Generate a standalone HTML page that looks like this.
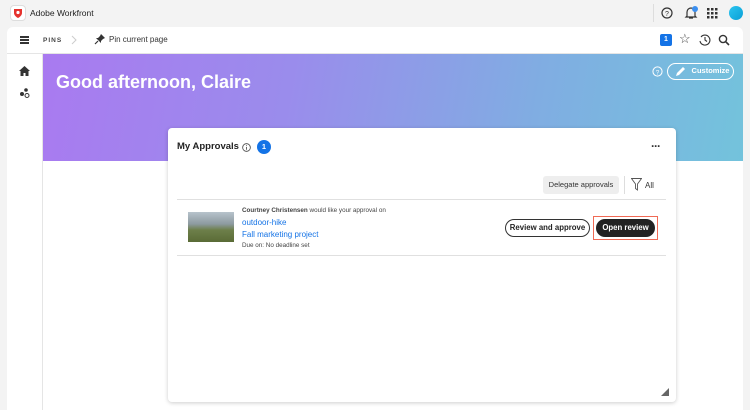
<!DOCTYPE html>
<html><head><style>
*{box-sizing:border-box;margin:0;padding:0}
body{width:750px;height:410px;overflow:hidden;background:#f3f3f3;font-family:"Liberation Sans",sans-serif;position:relative;color:#222}
.abs{position:absolute;white-space:nowrap}
</style></head><body>
<div class="abs" style="left:10px;top:5px;width:16px;height:16px;background:#fff;border:1px solid #ddd;border-radius:4px"></div>
<svg class="abs" style="left:13px;top:8px" width="10" height="10" viewBox="0 0 10 10"><path d="M1 1h8v4c0 2-2 4-4 5C3 9 1 7 1 5z" fill="#e5322d"/><circle cx="5" cy="4.5" r="1.6" fill="#fff"/></svg>
<div class="abs" style="left:30px;top:8px;font-size:8.5px">Adobe Workfront</div>
<div class="abs" style="left:653px;top:4px;width:1px;height:18px;background:#ddd"></div>
<svg class="abs" style="left:661px;top:7px" width="12" height="12" viewBox="0 0 12 12"><circle cx="6" cy="6" r="5" fill="none" stroke="#333" stroke-width="1.2"/><text x="6" y="9" font-size="7" text-anchor="middle" fill="#333" font-family="Liberation Sans">?</text></svg>
<svg class="abs" style="left:684px;top:6px" width="14" height="14" viewBox="0 0 14 14"><path d="M3 10V6a4 4 0 018 0v4l1 1H2z M5 12h4" fill="none" stroke="#333" stroke-width="1.2"/><circle cx="11" cy="3" r="3" fill="#3b8ff0"/></svg>
<svg class="abs" style="left:707px;top:8px" width="11" height="11"><g fill="#333"><rect x="0" y="0" width="2.5" height="2.5"/><rect x="4" y="0" width="2.5" height="2.5"/><rect x="8" y="0" width="2.5" height="2.5"/><rect x="0" y="4" width="2.5" height="2.5"/><rect x="4" y="4" width="2.5" height="2.5"/><rect x="8" y="4" width="2.5" height="2.5"/><rect x="0" y="8" width="2.5" height="2.5"/><rect x="4" y="8" width="2.5" height="2.5"/><rect x="8" y="8" width="2.5" height="2.5"/></g></svg>
<div class="abs" style="left:729px;top:6px;width:14px;height:14px;border-radius:50%;background:linear-gradient(135deg,#2bc5f0,#0a9fd6)"></div>

<div class="abs" style="left:7px;top:27px;width:736px;height:383px;background:#fff;border-radius:6px 6px 0 0"></div>
<div class="abs" style="left:7px;top:53px;width:736px;height:1px;background:#e5e5e5"></div>
<div class="abs" style="left:20px;top:36px;width:9px;height:1.5px;background:#333;box-shadow:0 3px 0 #333,0 6px 0 #333"></div>
<div class="abs" style="left:43px;top:37px;font-size:6.5px;font-weight:bold;letter-spacing:1px;color:#444">PINS</div>
<svg class="abs" style="left:71px;top:35px" width="6" height="10"><path d="M1 1l4 4-4 4" fill="none" stroke="#ccc"/></svg>
<svg class="abs" style="left:94px;top:33px" width="12" height="12" viewBox="0 0 12 12"><path d="M7 1l4 4-2 1-2 2 0 2-5-5 2 0 2-2z" fill="#333"/><path d="M4 8L1 11" stroke="#333" stroke-width="1.2"/></svg>
<div class="abs" style="left:109px;top:35px;font-size:8px;color:#333">Pin current page</div>
<div class="abs" style="left:660px;top:34px;width:12px;height:12px;background:#1473e6;color:#fff;font-size:7px;text-align:center;line-height:12px;border-radius:2px;font-weight:bold">1</div>
<div class="abs" style="left:679px;top:31px;font-size:13px;color:#444">☆</div>
<svg class="abs" style="left:699px;top:34px" width="12" height="12" viewBox="0 0 12 12"><path d="M2 3A5 5 0 1 1 1 7" fill="none" stroke="#333" stroke-width="1.1"/><path d="M6 3v3l2 1.5" fill="none" stroke="#333" stroke-width="1.1"/></svg>
<svg class="abs" style="left:718px;top:34px" width="12" height="12" viewBox="0 0 12 12"><circle cx="5" cy="5" r="3.6" fill="none" stroke="#333" stroke-width="1.4"/><path d="M7.7 7.7L11 11" stroke="#333" stroke-width="1.6"/></svg>

<div class="abs" style="left:42px;top:54px;width:1px;height:356px;background:#e5e5e5"></div>
<svg class="abs" style="left:19px;top:66px" width="11" height="10" viewBox="0 0 11 10"><path d="M5.5 0L0 5h1.5v5h3V7h2v3h3V5H11z" fill="#333"/></svg>
<svg class="abs" style="left:19px;top:88px" width="11" height="10" viewBox="0 0 11 10"><circle cx="3" cy="6" r="2" fill="#333"/><circle cx="7" cy="2" r="1.8" fill="#333"/><circle cx="8" cy="7.5" r="2" fill="none" stroke="#333"/></svg>

<div class="abs" style="left:43px;top:54px;width:700px;height:107px;background:linear-gradient(100deg,#a97af0 0%,#9a8cec 35%,#80ade2 70%,#73c3dc 100%)"></div>
<div class="abs" style="left:56px;top:72px;font-size:18px;color:#fff;font-weight:bold">Good afternoon, Claire</div>
<svg class="abs" style="left:652px;top:66px" width="11" height="11" viewBox="0 0 12 12"><circle cx="6" cy="6" r="5" fill="none" stroke="#fff" stroke-width="1.1"/><text x="6" y="9" font-size="7" text-anchor="middle" fill="#fff" font-family="Liberation Sans">?</text></svg>
<div class="abs" style="left:667px;top:63px;width:67px;height:17px;border:1.5px solid #fff;border-radius:9px;color:#fff;font-size:7.5px;font-weight:bold;line-height:14px;padding-left:20px;text-align:center">Customize</div>
<svg class="abs" style="left:675px;top:66px" width="11" height="11" viewBox="0 0 11 11"><path d="M1 10l1-3 6-6 2 2-6 6z" fill="#fff"/></svg>

<div class="abs" style="left:168px;top:128px;width:508px;height:274px;background:#fff;border-radius:4px;box-shadow:0 1px 4px rgba(0,0,0,.2)"></div>
<div class="abs" style="left:177px;top:141px;font-size:9.5px;font-weight:bold;color:#222">My Approvals</div>
<svg class="abs" style="left:242px;top:143px" width="9" height="9" viewBox="0 0 10 10"><circle cx="5" cy="5" r="4.3" fill="none" stroke="#555"/><path d="M5 4.5v3M5 2.5v1" stroke="#555"/></svg>
<div class="abs" style="left:257px;top:140px;width:14px;height:14px;border-radius:50%;background:#1473e6;color:#fff;font-size:7.5px;text-align:center;line-height:14px;font-weight:bold">1</div>
<div class="abs" style="left:651px;top:139px;font-size:12px;font-weight:bold;color:#333;letter-spacing:-1px">···</div>
<div class="abs" style="left:543px;top:176px;width:76px;height:18px;background:#eee;border-radius:3px;font-size:7.5px;color:#333;text-align:center;line-height:18px">Delegate approvals</div>
<div class="abs" style="left:624px;top:176px;width:1px;height:18px;background:#ddd"></div>
<svg class="abs" style="left:631px;top:178px" width="11" height="13" viewBox="0 0 11 13"><path d="M.5.5h10L6.5 6v6l-2-1.5V6z" fill="none" stroke="#555" stroke-width=".9"/></svg>
<div class="abs" style="left:645px;top:181px;font-size:8px;color:#333">All</div>
<div class="abs" style="left:177px;top:199px;width:489px;height:1px;background:#e0e0e0"></div>
<div class="abs" style="left:177px;top:255px;width:489px;height:1px;background:#e0e0e0"></div>
<div class="abs" style="left:188px;top:212px;width:46px;height:30px;background:linear-gradient(180deg,#b7c3cc 0%,#8d9aa0 40%,#6d7f4a 60%,#5a6b36 100%)"></div>
<div class="abs" style="left:242px;top:207px;font-size:6.3px;color:#444"><b>Courtney Christensen</b> would like your approval on</div>
<div class="abs" style="left:242px;top:218px;font-size:8px;color:#1473e6">outdoor-hike</div>
<div class="abs" style="left:242px;top:230px;font-size:8px;color:#1473e6">Fall marketing project</div>
<div class="abs" style="left:242px;top:242px;font-size:6.3px;color:#444">Due on: No deadline set</div>
<div class="abs" style="left:505px;top:219px;width:85px;height:18px;border:1.5px solid #333;border-radius:9px;font-size:7.8px;font-weight:bold;color:#222;text-align:center;line-height:15px">Review and approve</div>
<div class="abs" style="left:593px;top:216px;width:65px;height:24px;border:1.5px solid #f06a55"></div>
<div class="abs" style="left:596px;top:219px;width:59px;height:18px;background:#222;border-radius:9px;font-size:7.8px;font-weight:bold;color:#fff;text-align:center;line-height:18px">Open review</div>
<svg class="abs" style="left:661px;top:388px" width="8" height="8"><path d="M8 0V8H0z" fill="#666"/></svg>
</body></html>
